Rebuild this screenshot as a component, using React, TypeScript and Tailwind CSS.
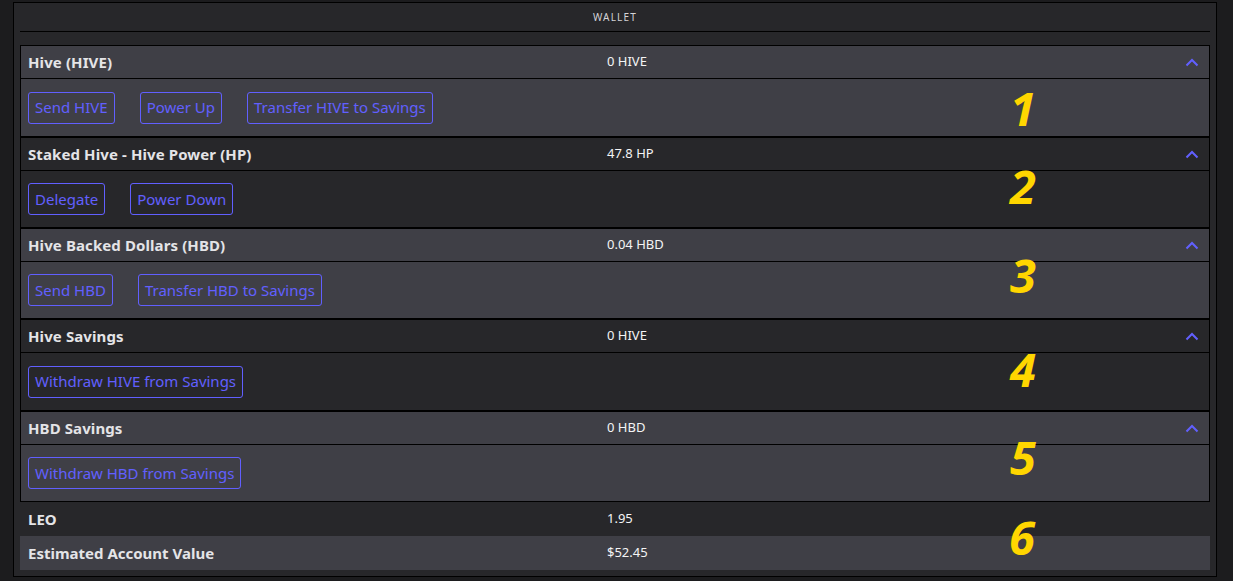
import React from 'react';

type Section = {
  id: number;
  label: string;
  value: string;
  light: boolean;
  actions: string[];
  body: string;
  mark: string;
};

const sections: Section[] = [
  { id: 1, label: 'Hive (HIVE)', value: '0 HIVE', light: true, actions: ['Send HIVE', 'Power Up', 'Transfer HIVE to Savings'], body: 'h-[57px]', mark: 'top-[62px]' },
  { id: 2, label: 'Staked Hive - Hive Power (HP)', value: '47.8 HP', light: false, actions: ['Delegate', 'Power Down'], body: 'h-[56px]', mark: 'top-[48px]' },
  { id: 3, label: 'Hive Backed Dollars (HBD)', value: '0.04 HBD', light: true, actions: ['Send HBD', 'Transfer HBD to Savings'], body: 'h-[56px]', mark: 'top-[46px]' },
  { id: 4, label: 'Hive Savings', value: '0 HIVE', light: false, actions: ['Withdraw HIVE from Savings'], body: 'h-[57px]', mark: 'top-[49px]' },
  { id: 5, label: 'HBD Savings', value: '0 HBD', light: true, actions: ['Withdraw HBD from Savings'], body: 'h-[56px]', mark: 'top-[45px]' },
];

function ChevronUp() {
  return (
    <svg width="14" height="9" viewBox="0 0 14 9" fill="none" className="text-indigo-500">
      <path d="M1.5 7.5 L7 2 L12.5 7.5" stroke="currentColor" strokeWidth="2" />
    </svg>
  );
}

// yellow hand-added numbers sitting over the table
function Marker({ n, pos }: { n: number; pos: string }) {
  return (
    <span
      className={
        'pointer-events-none absolute left-[989px] -translate-y-1/2 text-[47px] font-bold italic leading-none text-[#ffd600] ' +
        pos
      }
    >
      {n}
    </span>
  );
}

export default function App() {
  return (
    <div className="min-h-[581px] bg-[#1c1c1e] pt-[2px] font-['Noto_Sans',sans-serif]">
      <div className="ml-[13px] w-[1204px] border border-black bg-[#27272a] px-[6px] pb-[6px]">
        <div className="flex h-[29px] items-center justify-center border-b border-black text-[10px] tracking-[0.12em] text-zinc-300">
          WALLET
        </div>

        <div className="mt-[13px] border border-black">
          {sections.map((s, i) => (
            <div
              key={s.id}
              className={
                (s.light ? 'bg-[#3f3f46] ' : 'bg-[#27272a] ') +
                (i > 0 ? 'border-t-2 border-black ' : '') +
                'relative'
              }
            >
              <div className="flex h-[33px] items-center border-b border-black pl-[7px] pr-[10px]">
                <span className="w-[579px] text-[15px] font-bold tracking-[0.1px] text-zinc-200">{s.label}</span>
                <span className="flex-1 text-[13px] text-zinc-100">{s.value}</span>
                <ChevronUp />
              </div>
              <div className={'flex items-center gap-[25px] pl-[7px] ' + s.body}>
                {s.actions.map((a) => (
                  <button
                    key={a}
                    className="h-[32px] rounded-[3px] border border-indigo-500 px-[6px] text-[15px] text-indigo-500"
                  >
                    {a}
                  </button>
                ))}
              </div>
              <Marker n={s.id} pos={s.mark} />
            </div>
          ))}
        </div>

        <div className="relative">
          <div className="flex h-[34px] items-center pl-[8px]">
            <span className="w-[579px] text-[15px] font-bold text-zinc-200">LEO</span>
            <span className="text-[13px] text-zinc-100">1.95</span>
          </div>
          <div className="flex h-[34px] items-center bg-[#3f3f46] pl-[8px]">
            <span className="w-[579px] text-[15px] font-bold text-zinc-200">Estimated Account Value</span>
            <span className="text-[13px] text-zinc-100">$52.45</span>
          </div>
          <Marker n={6} pos="top-[35px]" />
        </div>
      </div>
    </div>
  );
}
